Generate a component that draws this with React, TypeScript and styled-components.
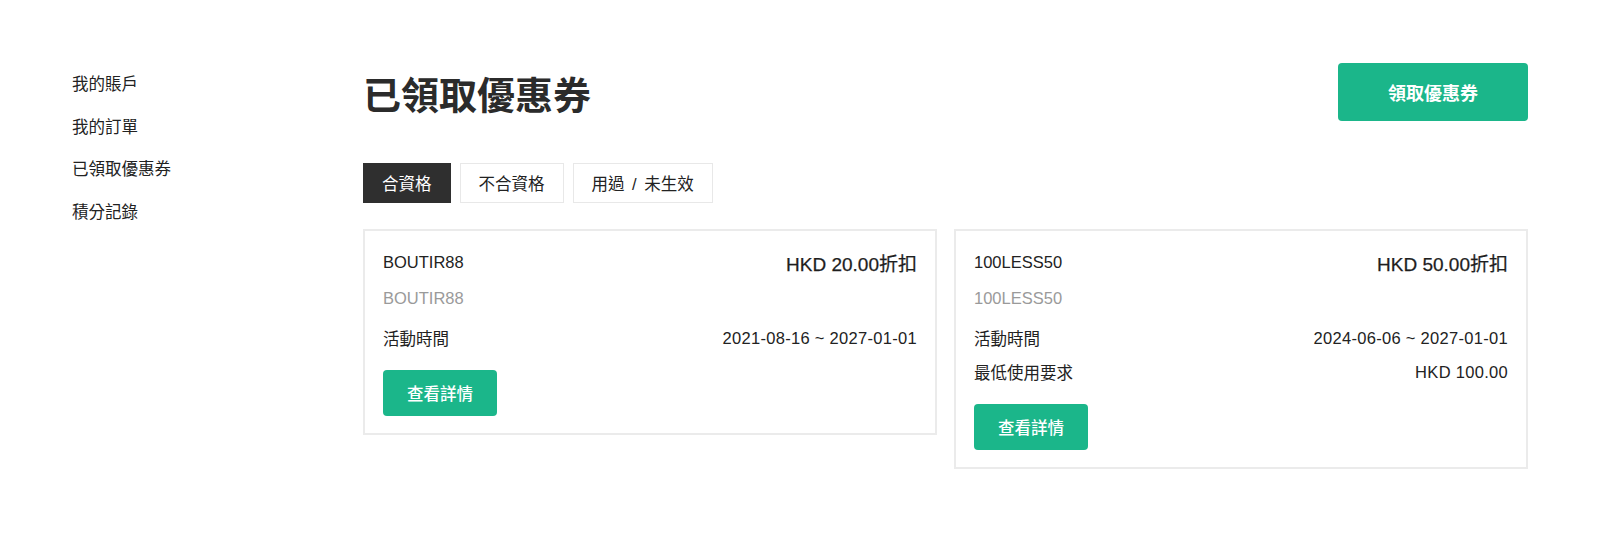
import React from "react";
import styled, { createGlobalStyle } from "styled-components";

const GlobalStyle = createGlobalStyle`
  * { box-sizing: border-box; }
  html, body { margin: 0; padding: 0; background: #ffffff; }
  body {
    font-family: "Liberation Sans", "Noto Sans CJK TC", sans-serif;
    color: #222222;
  }
`;

const Page = styled.div`
  width: 1456px;
  margin: 0 auto;
  padding-top: 63px;
  display: flex;
  align-items: flex-start;
`;

const Sidebar = styled.nav`
  width: 291px;
  flex-shrink: 0;
  display: flex;
  flex-direction: column;
`;

const NavItem = styled.a`
  font-size: 16.5px;
  line-height: 42.6px;
  color: #222222;
  text-decoration: none;
  cursor: pointer;
`;

const Main = styled.main`
  flex: 1;
  display: flex;
  flex-direction: column;
`;

const HeaderRow = styled.div`
  display: flex;
  justify-content: space-between;
  align-items: center;
  height: 58px;
`;

const Title = styled.h1`
  margin: 0;
  font-size: 38px;
  font-weight: 700;
  color: #2b2b2b;
  letter-spacing: 0;
`;

const GreenButton = styled.button<{ $w: number; $h: number; $size: number; $weight: number }>`
  width: ${(p) => p.$w}px;
  height: ${(p) => p.$h}px;
  background: #1bb68a;
  color: #ffffff;
  border: none;
  border-radius: 4px;
  font-family: inherit;
  font-size: ${(p) => p.$size}px;
  font-weight: ${(p) => p.$weight};
  cursor: pointer;
  padding: 0;
`;

const Tabs = styled.div`
  display: flex;
  gap: 9px;
  margin-top: 42px;
`;

const Tab = styled.button<{ $active?: boolean }>`
  height: 40px;
  padding: 0 18px;
  border: 1px solid ${(p) => (p.$active ? "#2f2f2f" : "#e8e8e8")};
  background: ${(p) => (p.$active ? "#2f2f2f" : "#ffffff")};
  color: ${(p) => (p.$active ? "#ffffff" : "#222222")};
  font-family: inherit;
  font-size: 16.5px;
  word-spacing: 3px;
  cursor: pointer;
`;

const CardGrid = styled.div`
  display: grid;
  grid-template-columns: 1fr 1fr;
  column-gap: 17px;
  align-items: start;
  margin-top: 26px;
`;

const Card = styled.div`
  border: 2px solid #ebebeb;
  padding: 18px 18px 17px;
  display: flex;
  flex-direction: column;
`;

const CardHead = styled.div`
  display: flex;
  justify-content: space-between;
  align-items: center;
  height: 26px;
`;

const Code = styled.div`
  font-size: 16.5px;
  color: #222222;
`;

const Amount = styled.div`
  font-size: 19px;
  font-weight: 400;
  color: #1e1e1e;
  -webkit-text-stroke: 0.25px #1e1e1e;
`;

const SubCode = styled.div`
  margin-top: 10px;
  height: 26px;
  line-height: 26px;
  font-size: 16.5px;
  color: #9a9a9a;
`;

const InfoList = styled.div`
  margin-top: 10px;
  display: flex;
  flex-direction: column;
`;

const InfoRow = styled.div`
  display: flex;
  justify-content: space-between;
  align-items: center;
  height: 34px;
  font-size: 16.5px;
  color: #222222;
`;

const Value = styled.span`
  letter-spacing: 0.3px;
`;

const Actions = styled.div`
  margin-top: 15px;
`;

type Coupon = {
  code: string;
  amount: string;
  period: string;
  minimum?: string;
};

const coupons: Coupon[] = [
  { code: "BOUTIR88", amount: "HKD 20.00折扣", period: "2021-08-16 ~ 2027-01-01" },
  {
    code: "100LESS50",
    amount: "HKD 50.00折扣",
    period: "2024-06-06 ~ 2027-01-01",
    minimum: "HKD 100.00",
  },
];

export default function App() {
  return (
    <>
      <GlobalStyle />
      <Page>
        <Sidebar>
          <NavItem>我的賬戶</NavItem>
          <NavItem>我的訂單</NavItem>
          <NavItem>已領取優惠券</NavItem>
          <NavItem>積分記錄</NavItem>
        </Sidebar>
        <Main>
          <HeaderRow>
            <Title>已領取優惠券</Title>
            <GreenButton $w={190} $h={58} $size={18} $weight={700}>
              領取優惠券
            </GreenButton>
          </HeaderRow>
          <Tabs>
            <Tab $active>合資格</Tab>
            <Tab>不合資格</Tab>
            <Tab>用過 / 未生效</Tab>
          </Tabs>
          <CardGrid>
            {coupons.map((c) => (
              <Card key={c.code}>
                <CardHead>
                  <Code>{c.code}</Code>
                  <Amount>{c.amount}</Amount>
                </CardHead>
                <SubCode>{c.code}</SubCode>
                <InfoList>
                  <InfoRow>
                    <span>活動時間</span>
                    <Value>{c.period}</Value>
                  </InfoRow>
                  {c.minimum && (
                    <InfoRow>
                      <span>最低使用要求</span>
                      <Value>{c.minimum}</Value>
                    </InfoRow>
                  )}
                </InfoList>
                <Actions>
                  <GreenButton $w={114} $h={46} $size={16.5} $weight={500}>
                    查看詳情
                  </GreenButton>
                </Actions>
              </Card>
            ))}
          </CardGrid>
        </Main>
      </Page>
    </>
  );
}
